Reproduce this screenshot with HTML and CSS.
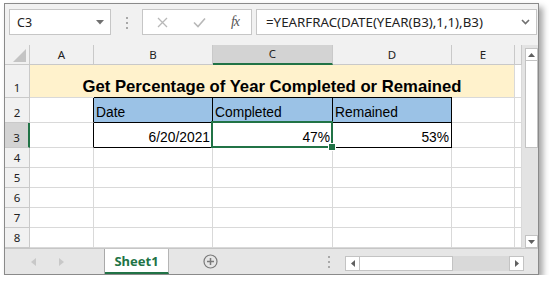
FILE: index.html
```html
<!DOCTYPE html>
<html lang="en">
<head>
    <meta charset="UTF-8">
    <title>Get Percentage of Year Completed or Remained</title>
    <link rel="stylesheet" href="styles.css">
</head>
<body>
    <div class="window">
        <div class="formula-bar">
            <div class="name-box">
                <span>C3</span>
                <svg width="8" height="5" viewBox="0 0 8 5"><path d="M0 0h8L4 4.5z" fill="#707070"/></svg>
            </div>
            <div class="grip"><i></i><i></i><i></i></div>
            <div class="fx-box">
                <svg width="11" height="11" viewBox="0 0 11 11"><path d="M1 1L10 10M10 1L1 10" stroke="#b8b8b8" stroke-width="1.3"/></svg>
                <svg width="13" height="11" viewBox="0 0 13 11"><path d="M1 5.5l4 4L12 1.5" stroke="#b8b8b8" stroke-width="1.6" fill="none"/></svg>
                <span class="fx">fx</span>
            </div>
            <div class="formula-input">
                <span>=YEARFRAC(DATE(YEAR(B3),1,1),B3)</span>
                <svg width="9" height="6" viewBox="0 0 9 6"><path d="M1 1l3.5 3.5L8 1" stroke="#707070" stroke-width="1.6" fill="none"/></svg>
            </div>
        </div>

        <div class="sheet">
            <div class="grid">
                <!-- column headers -->
                <div class="hd corner"><svg width="13" height="13" viewBox="0 0 13 13"><path d="M13 0V13H0z" fill="#c4c4c4"/></svg></div>
                <div class="hd col">A</div>
                <div class="hd col">B</div>
                <div class="hd col active-col">C</div>
                <div class="hd col">D</div>
                <div class="hd col">E</div>
                <div class="hd col"></div>

                <!-- row 1 -->
                <div class="hd row">1</div>
                <div class="cell title">Get Percentage of Year Completed or Remained</div>
                <div class="cell"></div>

                <!-- row 2 -->
                <div class="hd row">2</div>
                <div class="cell edge"></div>
                <div class="cell tbl head">Date</div>
                <div class="cell tbl head">Completed</div>
                <div class="cell tbl head">Remained</div>
                <div class="cell"></div>
                <div class="cell"></div>

                <!-- row 3 -->
                <div class="hd row active-row">3</div>
                <div class="cell edge"></div>
                <div class="cell tbl num">6/20/2021</div>
                <div class="cell tbl num selected">47%<span class="sel"></span><span class="handle"></span></div>
                <div class="cell tbl num">53%</div>
                <div class="cell"></div>
                <div class="cell"></div>

                <div class="hd row">4</div>
                <div class="cell"></div><div class="cell"></div><div class="cell"></div><div class="cell"></div><div class="cell"></div><div class="cell"></div>
                <div class="hd row">5</div>
                <div class="cell"></div><div class="cell"></div><div class="cell"></div><div class="cell"></div><div class="cell"></div><div class="cell"></div>
                <div class="hd row">6</div>
                <div class="cell"></div><div class="cell"></div><div class="cell"></div><div class="cell"></div><div class="cell"></div><div class="cell"></div>
                <div class="hd row">7</div>
                <div class="cell"></div><div class="cell"></div><div class="cell"></div><div class="cell"></div><div class="cell"></div><div class="cell"></div>
                <div class="hd row">8</div>
                <div class="cell"></div><div class="cell"></div><div class="cell"></div><div class="cell"></div><div class="cell"></div><div class="cell"></div>
            </div>

            <div class="vscroll">
                <div class="sbtn"><svg width="7" height="4" viewBox="0 0 7 4"><path d="M0 4h7L3.5 0z" fill="#606060"/></svg></div>
                <div class="vthumb"></div>
                <div class="vtrack"></div>
                <div class="sbtn"><svg width="7" height="4" viewBox="0 0 7 4"><path d="M0 0h7L3.5 4z" fill="#606060"/></svg></div>
            </div>
        </div>

        <div class="tabbar">
            <div class="tab-nav">
                <svg width="5" height="8" viewBox="0 0 5 8"><path d="M5 0v8L0 4z" fill="#c8c8c8"/></svg>
                <svg width="5" height="8" viewBox="0 0 5 8"><path d="M0 0v8l5-4z" fill="#c8c8c8"/></svg>
            </div>
            <div class="tab">Sheet1</div>
            <div class="add-sheet">
                <svg width="15" height="15" viewBox="0 0 15 15"><circle cx="7.5" cy="7.5" r="6.5" stroke="#7a7a7a" stroke-width="1.2" fill="none"/><path d="M7.5 4v7M4 7.5h7" stroke="#7a7a7a" stroke-width="1.5"/></svg>
            </div>
            <div class="grip tab-grip"><i></i><i></i><i></i></div>
            <div class="hscroll">
                <div class="sbtn"><svg width="4" height="7" viewBox="0 0 4 7"><path d="M4 0v7L0 3.5z" fill="#606060"/></svg></div>
                <div class="hthumb"></div>
                <div class="htrack"></div>
                <div class="sbtn"><svg width="4" height="7" viewBox="0 0 4 7"><path d="M0 0v7l4-3.5z" fill="#606060"/></svg></div>
            </div>
        </div>
    </div>
</body>
</html>
```

FILE: styles.css
```css
body { margin: 0; padding: 3px 0 0 4px; background: #fff; font-family: "Liberation Sans", Arial, sans-serif; }
.window { width: 535px; height: 272px; box-sizing: border-box; border: 1px solid #8a8a8a; background: #f1f1f1; box-shadow: 4px 4px 6px rgba(0,0,0,0.35); display: flex; flex-direction: column; overflow: hidden; }

/* formula bar */
.formula-bar { height: 41px; box-sizing: border-box; padding: 5px 1px 0 4px; display: flex; align-items: flex-start; }
.name-box, .fx-box, .formula-input { height: 26px; box-sizing: border-box; background: #fff; border: 1px solid #c6c6c6; display: flex; align-items: center; }
.name-box { width: 102px; padding: 0 6px 0 7px; justify-content: space-between; font-family: "Noto Sans", sans-serif; font-size: 12.5px; color: #222; }
.grip { width: 31px; flex-shrink: 0; display: flex; flex-direction: column; align-items: center; gap: 3px; padding-top: 8px; }
.grip i { display: block; width: 2px; height: 2px; background: #a8a8a8; }
.fx-box { width: 110px; padding: 0 12px 0 14px; justify-content: space-between; }
.fx { font-family: "Liberation Serif", serif; font-style: italic; font-size: 14px; color: #555; letter-spacing: -1px; }
.formula-input { flex: 1; margin-left: 4px; padding: 0 6px 0 9px; justify-content: space-between; font-family: "Noto Sans", sans-serif; font-size: 13.3px; color: #222; }

/* grid */
.sheet { display: flex; }
.grid { display: grid; grid-template-columns: 25px 64px 119px 120px 119px 63px 7px; grid-template-rows: 20px 33px 25px 25px repeat(5, 20px); background: #fff; }
.grid > div { box-sizing: border-box; border-right: 1px solid #d9d9d9; border-bottom: 1px solid #d9d9d9; display: flex; align-items: flex-end; overflow: visible; }
.hd { background: #f1f1f1; font-family: "Noto Sans", sans-serif; font-size: 11.5px; color: #222; justify-content: center; }
.grid > .hd { border-color: #c9c9c9; }
.hd.col { align-items: center; padding-bottom: 1px; }
.hd.row { padding-bottom: 2px; line-height: 14px; }
.corner { justify-content: flex-end; align-items: flex-end; padding: 0 3px 2px 0; }
.grid > .active-col { background: #d3d3d3; border-bottom: 2px solid #217346; }
.grid > .active-row { background: #d3d3d3; border-right: 2px solid #217346; }

.cell { font-size: 13.8px; line-height: 15px; padding: 0 2px 2px 2px; color: #000; position: relative; }
.grid > .title { grid-column: 2 / span 5; background: #fff2cc; justify-content: center; font-weight: bold; font-size: 16.7px; line-height: 19px; padding-bottom: 1px; }
.grid > .edge { border-right-color: #000; }
.grid > .tbl { border-right-color: #000; border-bottom-color: #000; }
.head { background: #9bc2e6; box-shadow: 0 -1px 0 #000; }
.num { justify-content: flex-end; }
.sel { position: absolute; top: -2px; left: -2px; right: -1px; bottom: -1px; border: 2px solid #217346; z-index: 2; }
.handle { position: absolute; right: -4px; bottom: -4px; width: 6px; height: 6px; background: #217346; border: 1px solid #fff; z-index: 3; }

/* vertical scrollbar */
.vscroll { width: 16px; height: 203px; box-sizing: border-box; padding: 3px 0 0 3px; display: flex; flex-direction: column; background: #e3e3e3; }
.sbtn { width: 13px; height: 13px; flex-shrink: 0; box-sizing: border-box; background: #fff; border: 1px solid #c3c3c3; display: flex; align-items: center; justify-content: center; }
.vthumb { height: 87px; background: #fff; border: 1px solid #c3c3c3; border-top: none; box-sizing: border-box; }
.vtrack { flex: 1; }

/* sheet tabs */
.tabbar { height: 26px; box-sizing: border-box; border-top: 1px solid #c6c6c6; background: #e6e6e6; display: flex; align-items: stretch; }
.tabbar > div { flex-shrink: 0; }
.tab-nav { width: 100px; box-sizing: border-box; border-right: 1px solid #a9a9a9; display: flex; align-items: center; padding-left: 26px; gap: 23px; }
.tab { width: 64px; box-sizing: border-box; background: #fff; border-right: 1px solid #b5b5b5; border-bottom: 2px solid #217346; display: flex; align-items: center; justify-content: center; font-family: "Noto Sans", sans-serif; font-weight: bold; font-size: 13px; color: #217346; }
.add-sheet { width: 82px; display: flex; align-items: center; justify-content: center; }
.tab-grip { width: 12px; padding-top: 7px; margin-left: 72px; }
.hscroll { display: flex; margin: 7px 0 0 10px; height: 15px; }
.hscroll .sbtn { width: 15px; height: 15px; }
.hthumb { width: 93px; height: 15px; box-sizing: border-box; background: #fff; border: 1px solid #c3c3c3; border-left: none; }
.htrack { width: 56px; background: #d9d9d9; }
```
